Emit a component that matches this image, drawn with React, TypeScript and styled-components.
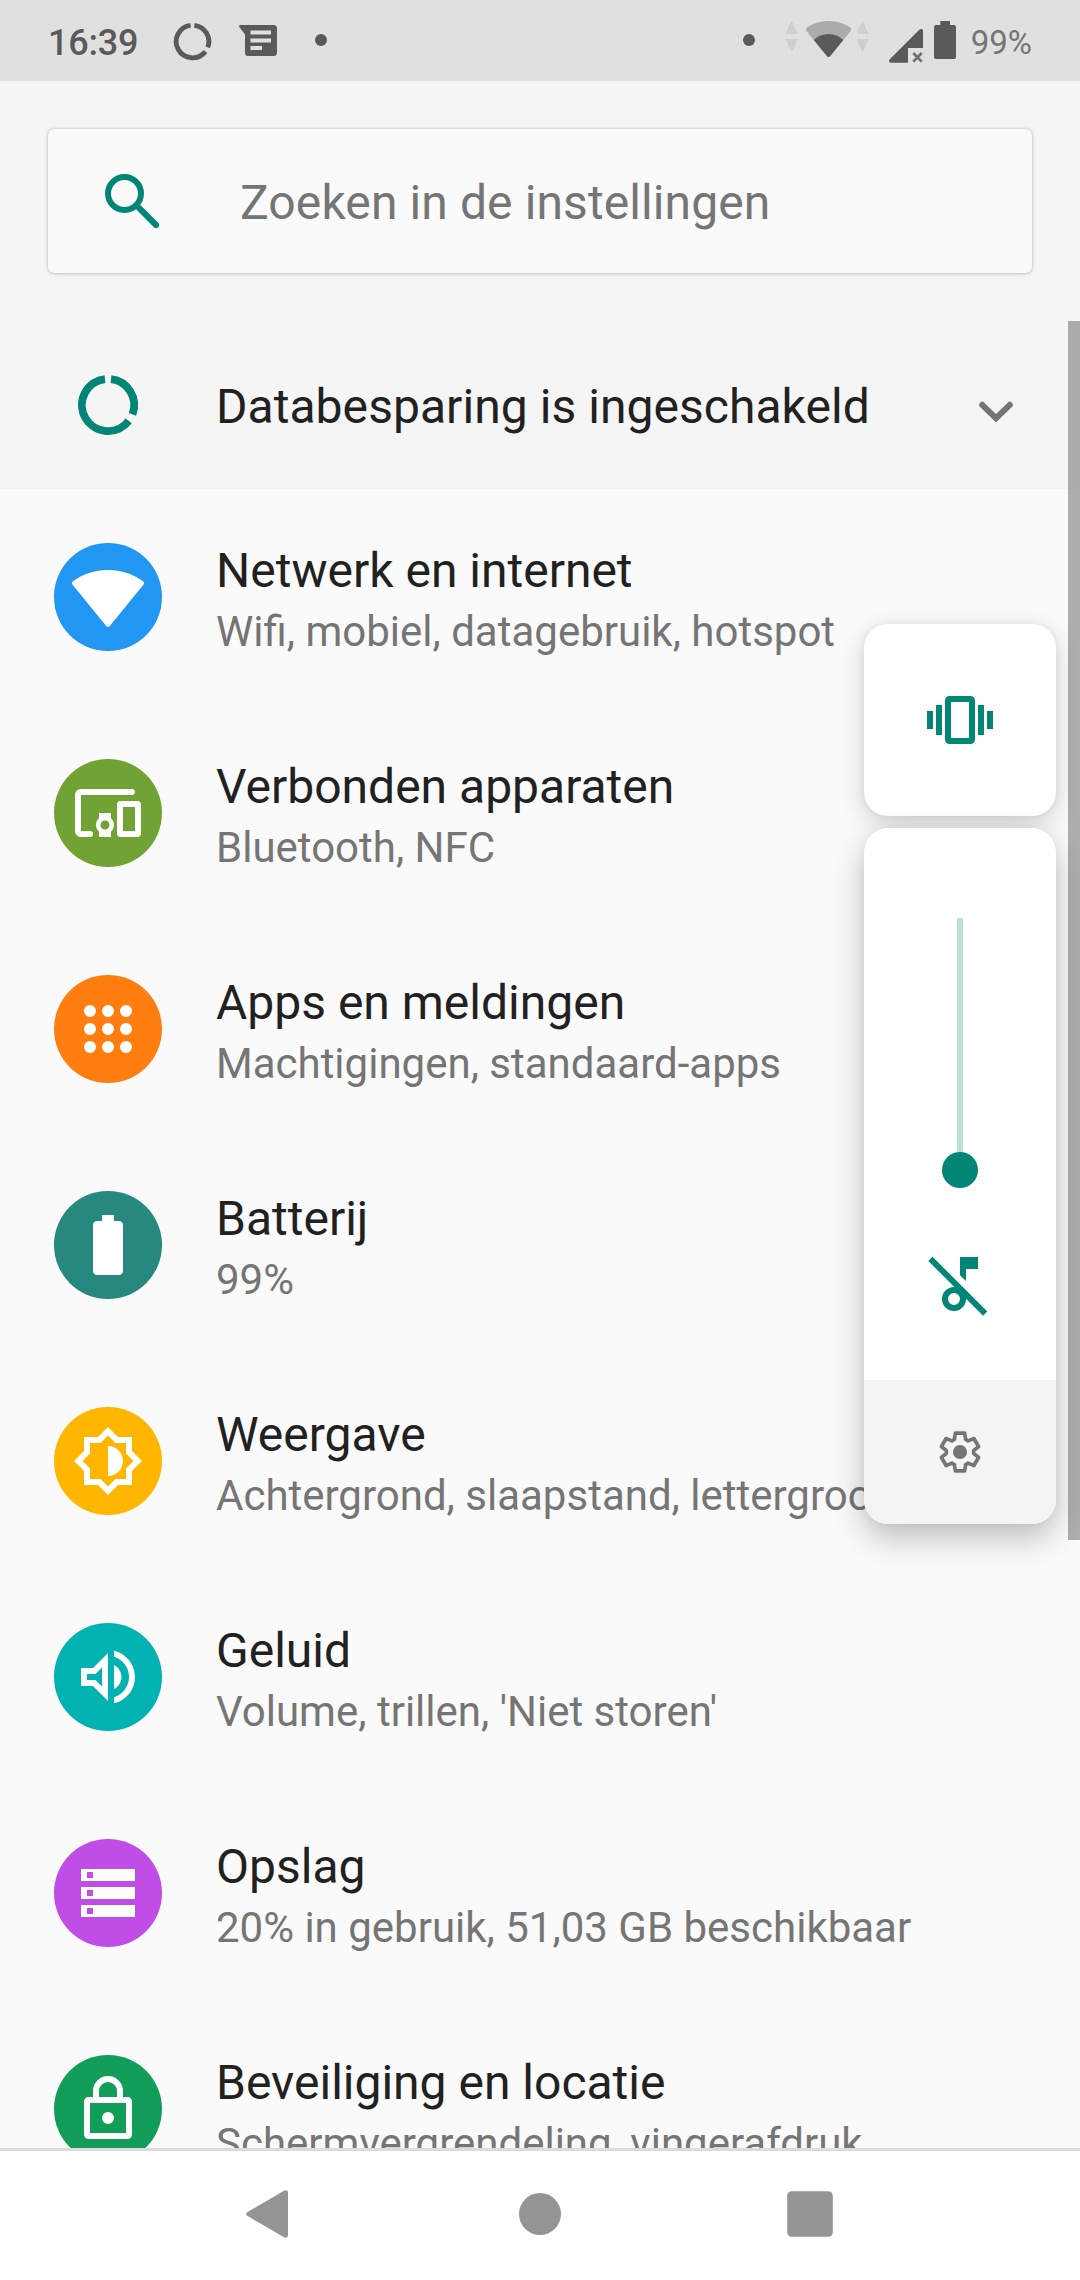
import React from 'react';
import styled, { createGlobalStyle } from 'styled-components';

const TEAL = '#008577';
const STATUS = '#5a5a5a';

const GlobalStyle = createGlobalStyle`
  * { box-sizing: border-box; }
  html, body { margin: 0; padding: 0; }
  body { font-family: Roboto, "Noto Sans", sans-serif; background: #fafafa; }
  svg { display: block; flex: none; }
`;

const Screen = styled.div`
  position: relative;
  width: 1080px;
  height: 2280px;
  display: flex;
  flex-direction: column;
  overflow: hidden;
  background: #fafafa;
`;

const StatusBar = styled.header`
  flex: none;
  height: 81px;
  display: flex;
  align-items: flex-start;
  justify-content: space-between;
  padding: 20px 48px 0;
  background: #e0e0e0;
`;

const StatusGroup = styled.div`
  display: flex;
  align-items: center;
  height: 42px;
`;

const Clock = styled.span`
  width: 92px;
  margin-right: 30px;
  padding-top: 3px;
  font-size: 36px;
  font-weight: 500;
  line-height: 42px;
  letter-spacing: -0.2px;
  color: ${STATUS};
`;

const BatteryLevel = styled.span`
  margin-left: 15px;
  padding-top: 3px;
  font-size: 33px;
  line-height: 42px;
  color: #757575;
`;

const Dot = styled.span<{ $before?: number; $after?: number }>`
  width: 12px;
  height: 12px;
  margin: 0 ${p => p.$after ?? 0}px 2px ${p => p.$before ?? 0}px;
  border-radius: 50%;
  background: ${STATUS};
`;

const MessageSlot = styled.span`
  margin-left: 24px;
`;

const SignalSlot = styled.span`
  margin: 0 10px 0 20px;
`;

const SearchArea = styled.div`
  flex: none;
  height: 240px;
  padding: 48px;
  background: #f5f5f5;
`;

const SearchCard = styled.div`
  height: 144px;
  display: flex;
  align-items: center;
  gap: 72px;
  padding-left: 48px;
  border-radius: 6px;
  background: #fafafa;
  box-shadow: 0 0 2px rgba(0, 0, 0, 0.24), 0 1px 5px rgba(0, 0, 0, 0.14);
`;

const SearchHint = styled.span`
  padding-top: 3px;
  font-size: 48px;
  line-height: 56px;
  letter-spacing: 0.1px;
  color: #757575;
`;

const Suggestion = styled.div`
  flex: none;
  height: 168px;
  display: flex;
  align-items: center;
  padding: 0 48px 0 72px;
  background: #f5f5f5;
`;

const SuggestionTitle = styled.span`
  flex: 1;
  margin-left: 72px;
  padding-top: 4px;
  font-size: 48px;
  line-height: 56px;
  letter-spacing: 0.05px;
  color: #212121;
`;

const List = styled.main`
  flex: 1;
  min-height: 0;
  overflow: hidden;
`;

const Row = styled.div`
  height: 216px;
  display: flex;
  align-items: center;
  gap: 54px;
  padding-left: 54px;
`;

const Badge = styled.div<{ $color: string }>`
  flex: none;
  width: 108px;
  height: 108px;
  display: flex;
  align-items: center;
  justify-content: center;
  border-radius: 50%;
  background: ${p => p.$color};
`;

const RowText = styled.div`
  display: flex;
  flex-direction: column;
  padding-top: 6px;
  white-space: nowrap;
`;

const RowTitle = styled.span`
  font-size: 48px;
  line-height: 64px;
  color: #212121;
`;

const RowSummary = styled.span`
  font-size: 42px;
  line-height: 58px;
  color: #757575;
`;

const ScrollThumb = styled.div`
  position: absolute;
  top: 321px;
  right: 0;
  width: 12px;
  height: 1219px;
  background: rgba(0, 0, 0, 0.3);
`;

const VolumeDialog = styled.aside`
  position: absolute;
  top: 624px;
  right: 24px;
  width: 192px;
  display: flex;
  flex-direction: column;
  gap: 12px;
`;

const VolumeCard = styled.div<{ $height: number }>`
  height: ${p => p.$height}px;
  display: flex;
  flex-direction: column;
  align-items: center;
  border-radius: 24px;
  overflow: hidden;
  background: #fff;
`;

const RingerCard = styled(VolumeCard)`
  justify-content: center;
  box-shadow: 0 8px 26px rgba(0, 0, 0, 0.17), 0 0 8px rgba(0, 0, 0, 0.06);
`;

const StreamCard = styled(VolumeCard)`
  box-shadow: 0 14px 32px rgba(0, 0, 0, 0.24), 0 0 10px rgba(0, 0, 0, 0.06);
`;

const Slider = styled.div`
  display: flex;
  flex-direction: column;
  align-items: center;
  margin: 90px 0 60px;
`;

const Track = styled.div`
  width: 6px;
  height: 234px;
  background: #bbdfdb;
`;

const Thumb = styled.div`
  width: 36px;
  height: 36px;
  border-radius: 50%;
  background: ${TEAL};
`;

const SettingsFooter = styled.div`
  width: 100%;
  height: 144px;
  margin-top: auto;
  display: flex;
  align-items: center;
  justify-content: center;
  background: #f4f4f4;
`;

const NavBar = styled.nav`
  flex: none;
  height: 132px;
  display: grid;
  grid-template-columns: repeat(3, 270px);
  justify-content: center;
  align-items: center;
  justify-items: center;
  background: #fff;
  box-shadow: inset 0 3px 0 #dcdcdc;
`;

const DataIcon = ({ size, color }: { size: number; color: string }) => (
  <svg width={size} height={size} viewBox="0 0 24 24" fill="none" stroke={color} strokeWidth="2.6">
    <path d="M13 3.36A8.7 8.7 0 0 1 20.15 15.1" />
    <path d="M18.9 17.3A8.7 8.7 0 1 1 11 3.36" />
  </svg>
);

const MessageIcon = () => (
  <svg width="38" height="32" viewBox="0 0 38 32">
    <path
      fill={STATUS}
      fillRule="evenodd"
      d="M1 0H34.5Q38 0 38 3.5V27.5Q38 31 34.5 31H9Q6 31 6 28V9.5L.3 2Q-.4 .3 1 0ZM11.5 5.5V9.5H32V5.5ZM11.5 13.5V17.5H32V13.5ZM11.5 21V25H23V21Z"
    />
  </svg>
);

const WifiStatusIcon = () => (
  <svg width="84" height="42" viewBox="785 20 84 42">
    <path fill="#cfcfcf" d="M785.3 34L791.6 20.7L798 34ZM785.3 39H798L791.6 52.3ZM856.3 34L862.5 20.7L868.8 34ZM856.3 39H868.8L862.5 52.3Z" />
    <path fill="#ababab" d="M813.7 40L806.5 31Q805.3 29 807 27.6Q816 21 828.6 21T850.2 27.6Q852 29 850.7 31L843.4 40Z" />
    <path fill={STATUS} d="M813.7 40Q820 34 828.5 34T843.4 40L830 56.4Q828.6 57.7 827.2 56.4Z" />
  </svg>
);

const SignalIcon = () => (
  <svg width="35" height="42" viewBox="888 20 35 42" overflow="visible">
    <path fill={STATUS} d="M890 62.7Q888 62.7 888 60.7Q888 60 889 59L918.5 29.6Q920 28.6 921 29.1Q922 29.6 922 31V48H907V62.7Z" />
    <path stroke="#6e6e6e" strokeWidth="2.6" d="M912.3 53L920.7 61.7M920.7 53L912.3 61.7" />
  </svg>
);

const BatteryStatusIcon = () => (
  <svg width="22" height="42" viewBox="0 0 22 42">
    <path fill={STATUS} d="M6.3 1H16V5H20Q22 5 22 7V37Q22 39 20 39H2Q0 39 0 37V7Q0 5 2 5H6.3Z" />
  </svg>
);

const SearchIcon = () => (
  <svg width="72" height="72" viewBox="0 0 24 24" fill="none" stroke={TEAL} strokeWidth="2">
    <circle cx="9.5" cy="9.5" r="5.5" />
    <path d="M14.4 14.4L20 20" strokeLinecap="round" strokeWidth="2.05" />
  </svg>
);

const ChevronIcon = () => (
  <svg width="72" height="72" viewBox="0 0 72 72" fill="none" stroke="#757575" strokeWidth="6" strokeLinecap="round">
    <path d="M22.2 35.8L36 49.2L49.8 35.8" />
  </svg>
);

const Glyph = ({ d }: { d: string }) => (
  <svg width="72" height="72" viewBox="0 0 24 24" fill="#fff" fillRule="evenodd" overflow="visible">
    <path d={d} />
  </svg>
);

const VibrateIcon = () => (
  <svg width="72" height="72" viewBox="0 0 72 72">
    <rect x="24" y="15" width="24" height="42" rx="1.5" fill="none" stroke={TEAL} strokeWidth="6" />
    <path fill={TEAL} d="M3 27H9V45H3ZM12 21H18V51H12ZM54 21H60V51H54ZM63 27H69V45H63Z" />
  </svg>
);

const MusicOffIcon = () => (
  <svg width="72" height="72" viewBox="924 1248 72 72" fill="none" stroke={TEAL} strokeWidth="6">
    <circle cx="954" cy="1299" r="9" />
    <path d="M930.4 1258.8L985.2 1313.6" />
    <path stroke="none" fill={TEAL} d="M960 1257H978V1269H966V1281L960 1275.3ZM960 1286L966 1292V1299H960Z" />
  </svg>
);

// Six identical teeth, each turned 60 degrees from the one before.
const gearPoints = Array.from({ length: 6 }, (_, tooth) => {
  const a = (tooth * Math.PI) / 3;
  return [[-5.6, -12.6], [-4.7, -18.8], [4.7, -18.8], [5.6, -12.6]]
    .map(([x, y]) => `${(x * Math.cos(a) - y * Math.sin(a)).toFixed(2)},${(x * Math.sin(a) + y * Math.cos(a)).toFixed(2)}`)
    .join(' ');
}).join(' ');

const GearIcon = () => (
  <svg width="48" height="48" viewBox="-24 -24 48 48">
    <polygon points={gearPoints} fill="none" stroke="#757575" strokeWidth="3.7" strokeLinejoin="round" />
    <circle r="7" fill="#757575" />
  </svg>
);

const BackIcon = () => (
  <svg width="48" height="48" viewBox="0 0 48 48">
    <path fill="#949494" d="M1.2 22.2L38 .7Q42 -.8 42 3V45Q42 48.8 38 47.3L1.2 25.8Q-1 24 1.2 22.2Z" />
  </svg>
);

const HomeIcon = () => (
  <svg width="42" height="42" viewBox="0 0 42 42">
    <circle cx="21" cy="21" r="21" fill="#949494" />
  </svg>
);

const RecentsIcon = () => (
  <svg width="46" height="46" viewBox="0 0 46 46">
    <rect x=".2" y=".2" width="45.6" height="45.6" rx="4.5" fill="#949494" />
  </svg>
);

const rows = [
  {
    title: 'Netwerk en internet',
    summary: 'Wifi, mobiel, datagebruik, hotspot',
    color: '#2196f3',
    d: 'M12.6 21.7L23.8 7.9C24.1 7.5 24.05 7 23.6 6.7C20.5 4.4 16.5 3 12 3S3.5 4.4 .4 6.7C-.05 7-.1 7.5 .2 7.9L11.4 21.7C11.7 22.1 12.3 22.1 12.6 21.7Z',
  },
  {
    title: 'Verbonden apparaten',
    summary: 'Bluetooth, NFC',
    color: '#70a334',
    d: 'M3 6H20a1 1 0 0 0 0-2H3c-1.1 0-2 .9-2 2v12c0 1.1.9 2 2 2h3a1 1 0 0 0 0-2H3V6zM13 12H9v1.78c-.61.55-1 1.33-1 2.22s.39 1.67 1 2.22V20h4v-1.78c.61-.55 1-1.34 1-2.22s-.39-1.67-1-2.22V12zM11 17.5c-.83 0-1.5-.67-1.5-1.5s.67-1.5 1.5-1.5 1.5.67 1.5 1.5-.67 1.5-1.5 1.5zM22 8h-6c-.5 0-1 .5-1 1v10c0 .5.5 1 1 1h6c.5 0 1-.5 1-1V9c0-.5-.5-1-1-1zM21 18h-4v-8h4v8z',
  },
  {
    title: 'Apps en meldingen',
    summary: 'Machtigingen, standaard-apps',
    color: '#ff7e0f',
    d: [6, 12, 18].flatMap(y => [6, 12, 18].map(x => `M${x - 2} ${y}a2 2 0 1 1 4 0a2 2 0 1 1-4 0z`)).join(''),
  },
  {
    title: 'Batterij',
    summary: '99%',
    color: '#26887f',
    d: 'M10 2h4v2h1.67c.73 0 1.33.6 1.33 1.33v15.34c0 .73-.6 1.33-1.33 1.33H8.33C7.6 22 7 21.4 7 20.67V5.33C7 4.6 7.6 4 8.33 4H10z',
  },
  {
    title: 'Weergave',
    summary: 'Achtergrond, slaapstand, lettergrootte',
    color: '#ffb600',
    d: 'M20 8.69V4h-4.69L12 .69 8.69 4H4v4.69L.69 12 4 15.31V20h4.69L12 23.31 15.31 20H20v-4.69L23.31 12 20 8.69zM18 14.48V18h-3.52L12 20.48 9.52 18H6v-3.52L3.52 12 6 9.52V6h3.52L12 3.52 14.48 6H18v3.52L20.48 12 18 14.48zM12 7v10c2.76 0 5-2.24 5-5s-2.24-5-5-5z',
  },
  {
    title: 'Geluid',
    summary: "Volume, trillen, 'Niet storen'",
    color: '#00b2b2',
    d: 'M3 9v6h4l5 5V4L7 9H3zM10 8.83v6.34L7.83 13H5v-2h2.83L10 8.83zM16.5 12c0-1.77-1.02-3.29-2.5-4.03v8.05c1.48-.73 2.5-2.25 2.5-4.02zM14 3.23v2.06c2.89.86 5 3.54 5 6.71s-2.11 5.85-5 6.71v2.06c4.01-.91 7-4.49 7-8.77s-2.99-7.86-7-8.77z',
  },
  {
    title: 'Opslag',
    summary: '20% in gebruik, 51,03 GB beschikbaar',
    color: '#c04ee6',
    d: 'M3 4h18v4H3zM5 5v2h2V5zM3 10h18v4H3zM5 11v2h2v-2zM3 16h18v4H3zM5 17v2h2v-2z',
  },
  {
    title: 'Beveiliging en locatie',
    summary: 'Schermvergrendeling, vingerafdruk',
    color: '#129e58',
    d: 'M5.5 8H7V6a5 5 0 0 1 10 0v2h1.5A1.5 1.5 0 0 1 20 9.5v11a1.5 1.5 0 0 1-1.5 1.5h-13A1.5 1.5 0 0 1 4 20.5v-11A1.5 1.5 0 0 1 5.5 8zM9 8h6V6a3 3 0 0 0-6 0zM6 10v10h12V10zM10 15a2 2 0 1 1 4 0a2 2 0 1 1-4 0z',
  },
];

export default function App() {
  return (
    <Screen>
      <GlobalStyle />
      <StatusBar>
        <StatusGroup>
          <Clock>16:39</Clock>
          <DataIcon size={45} color={STATUS} />
          <MessageSlot>
            <MessageIcon />
          </MessageSlot>
          <Dot $before={38} />
        </StatusGroup>
        <StatusGroup>
          <Dot $after={30} />
          <WifiStatusIcon />
          <SignalSlot>
            <SignalIcon />
          </SignalSlot>
          <BatteryStatusIcon />
          <BatteryLevel>99%</BatteryLevel>
        </StatusGroup>
      </StatusBar>

      <SearchArea>
        <SearchCard>
          <SearchIcon />
          <SearchHint>Zoeken in de instellingen</SearchHint>
        </SearchCard>
      </SearchArea>

      <Suggestion>
        <DataIcon size={72} color={TEAL} />
        <SuggestionTitle>Databesparing is ingeschakeld</SuggestionTitle>
        <ChevronIcon />
      </Suggestion>

      <List>
        {rows.map(row => (
          <Row key={row.title}>
            <Badge $color={row.color}>
              <Glyph d={row.d} />
            </Badge>
            <RowText>
              <RowTitle>{row.title}</RowTitle>
              <RowSummary>{row.summary}</RowSummary>
            </RowText>
          </Row>
        ))}
      </List>

      <NavBar>
        <BackIcon />
        <HomeIcon />
        <RecentsIcon />
      </NavBar>

      <ScrollThumb />
      <VolumeDialog>
        <RingerCard $height={192}>
          <VibrateIcon />
        </RingerCard>
        <StreamCard $height={696}>
          <Slider>
            <Track />
            <Thumb />
          </Slider>
          <MusicOffIcon />
          <SettingsFooter>
            <GearIcon />
          </SettingsFooter>
        </StreamCard>
      </VolumeDialog>
    </Screen>
  );
}
